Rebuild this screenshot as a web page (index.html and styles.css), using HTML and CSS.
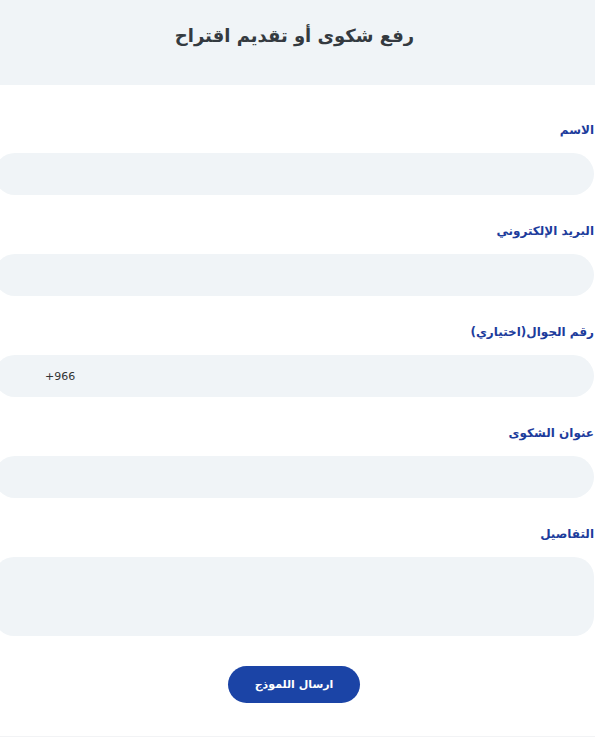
FILE: index.html
```html
<!DOCTYPE html>
<html lang="ar" dir="rtl">
<head>
<meta charset="utf-8">
<title>رفع شكوى أو تقديم اقتراح</title>
<link rel="stylesheet" href="styles.css">
</head>
<body>
<div class="page">
  <header class="hero">
    <h1 class="hero-title">رفع شكوى أو تقديم اقتراح</h1>
  </header>
  <form class="form">
    <div class="field">
      <label class="label">الاسم</label>
      <input class="input" type="text">
    </div>
    <div class="field">
      <label class="label">البريد الإلكتروني</label>
      <input class="input" type="email">
    </div>
    <div class="field">
      <label class="label">رقم الجوال(اختياري)</label>
      <input class="input input-phone" type="text" dir="ltr" value="+966">
    </div>
    <div class="field">
      <label class="label">عنوان الشكوى</label>
      <input class="input" type="text">
    </div>
    <div class="field field-last">
      <label class="label">التفاصيل</label>
      <textarea class="input textarea"></textarea>
    </div>
    <div class="actions">
      <button class="submit" type="button">ارسال اللموذج</button>
    </div>
  </form>
  <div class="footer-strip"></div>
</div>
</body>
</html>
```
FILE: styles.css
```css
html, body {
  margin: 0;
  padding: 0;
  background: #ffffff;
  overflow: hidden;
}
body {
  font-family: "DejaVu Sans", "Noto Sans", sans-serif;
}
.page {
  width: 601px;
  margin-left: -6px;
}
.hero {
  background: #f0f4f7;
  height: 85px;
  padding-top: 22px;
  box-sizing: border-box;
}
.hero-title {
  margin: 0;
  text-align: center;
  font-size: 18px;
  line-height: 28px;
  font-weight: bold;
  color: #343a40;
}
.form {
  padding-top: 35px;
  display: flex;
  flex-direction: column;
  padding-right: 1px;
}
.field {
  display: flex;
  flex-direction: column;
  margin-bottom: 26px;
}
.field-last {
  margin-bottom: 30px;
}
.label {
  display: block;
  font-size: 12px;
  line-height: 20px;
  font-weight: bold;
  color: #1d3c9c;
  margin-bottom: 13px;
}
.input {
  display: block;
  width: 100%;
  height: 42px;
  box-sizing: border-box;
  border: none;
  outline: none;
  background: #f0f4f7;
  border-radius: 21px;
  font-family: "DejaVu Sans", sans-serif;
  font-size: 11px;
  color: #333333;
  padding: 0 20px;
}
.input-phone {
  text-align: left;
  padding-left: 51px;
}
.textarea {
  height: 79px;
  resize: none;
  border-radius: 20px;
}
.actions {
  display: flex;
  justify-content: center;
}
.submit {
  width: 132px;
  height: 37px;
  border: none;
  border-radius: 19px;
  background: #1b44a6;
  color: #ffffff;
  font-family: "DejaVu Sans", sans-serif;
  font-weight: bold;
  font-size: 11px;
}
.footer-strip {
  margin-top: 33px;
  height: 2px;
  background: #f2f3f5;
}
```
